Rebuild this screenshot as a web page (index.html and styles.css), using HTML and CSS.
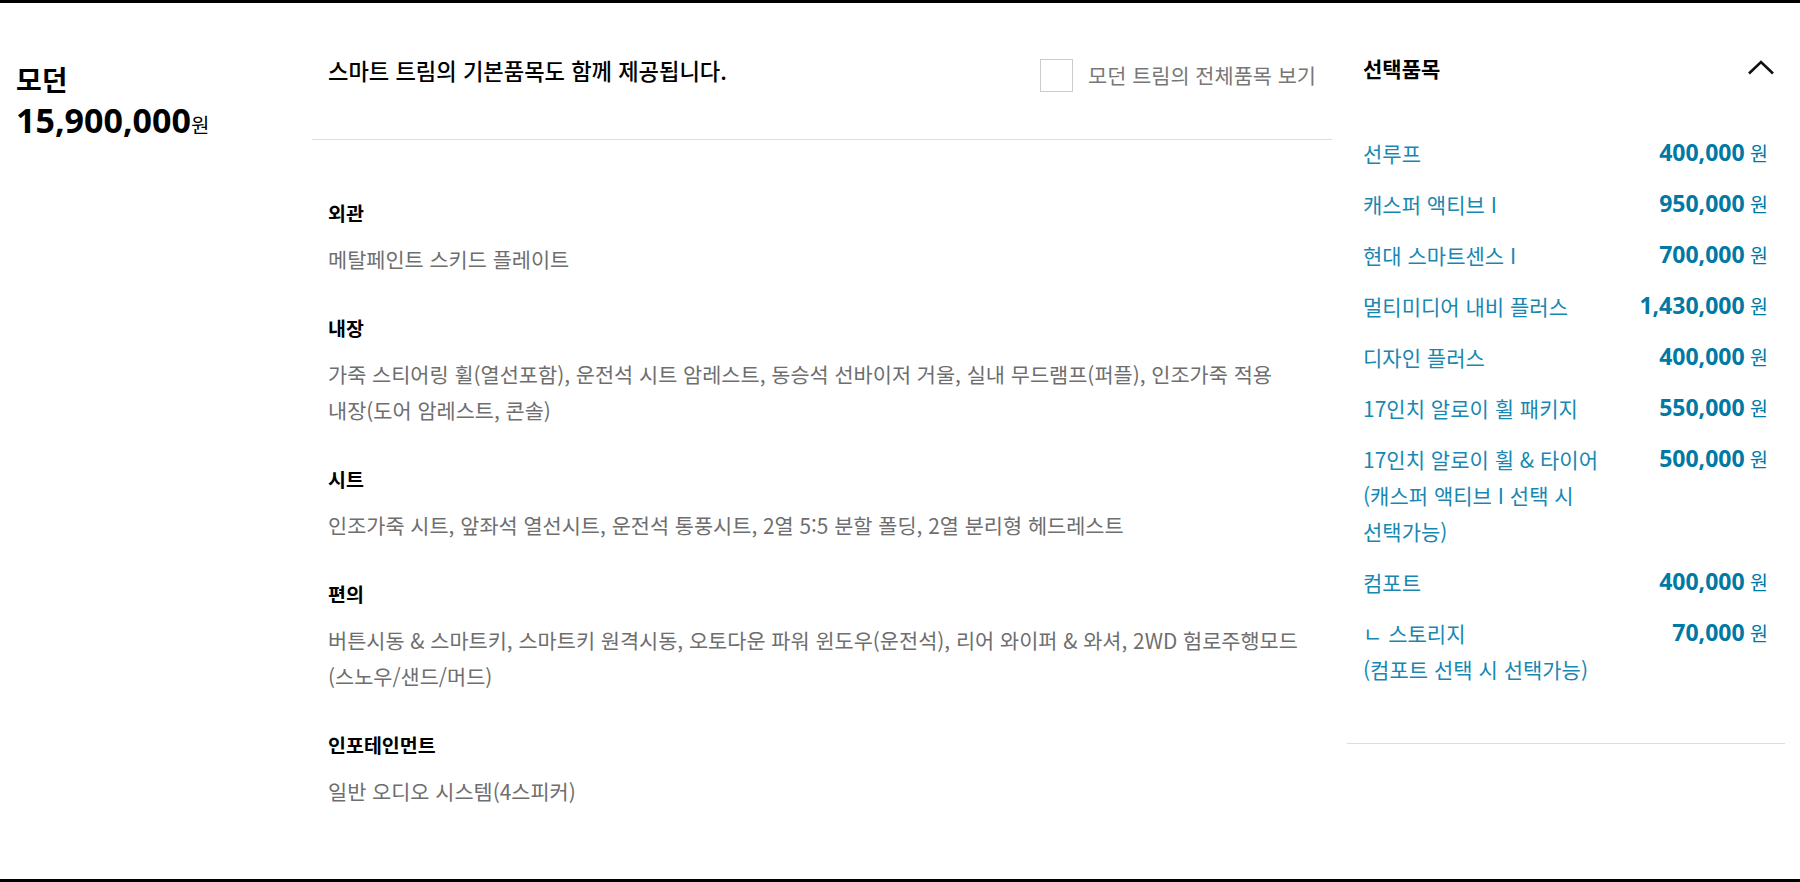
FILE: index.html
```html
<!DOCTYPE html>
<html lang="ko">
<head>
<meta charset="UTF-8">
<meta name="viewport" content="width=device-width, initial-scale=1.0">
<title>모던 트림</title>
<link rel="stylesheet" href="styles.css">
</head>
<body>
<div class="page">
  <div class="trim">
    <div class="trim-name">
      <h1>모던</h1>
      <p class="trim-price"><strong>15,900,000</strong>원</p>
    </div>

    <div class="trim-items">
      <div class="items-head">
        <h2>스마트 트림의 기본품목도 함께 제공됩니다.</h2>
        <label class="check"><span class="box"></span>모던 트림의 전체품목 보기</label>
      </div>
      <div class="item-list">
        <div class="group">
          <h3>외관</h3>
          <p>메탈페인트 스키드 플레이트</p>
        </div>
        <div class="group">
          <h3>내장</h3>
          <p>가죽 스티어링 휠(열선포함), 운전석 시트 암레스트, 동승석 선바이저 거울, 실내 무드램프(퍼플), 인조가죽 적용<br>내장(도어 암레스트, 콘솔)</p>
        </div>
        <div class="group">
          <h3>시트</h3>
          <p>인조가죽 시트, 앞좌석 열선시트, 운전석 통풍시트, 2열 5:5 분할 폴딩, 2열 분리형 헤드레스트</p>
        </div>
        <div class="group">
          <h3>편의</h3>
          <p>버튼시동 &amp; 스마트키, 스마트키 원격시동, 오토다운 파워 윈도우(운전석), 리어 와이퍼 &amp; 와셔, 2WD 험로주행모드<wbr>(스노우/샌드/머드)</p>
        </div>
        <div class="group">
          <h3>인포테인먼트</h3>
          <p>일반 오디오 시스템(4스피커)</p>
        </div>
      </div>
    </div>

    <div class="options">
      <div class="options-head">
        <h2>선택품목</h2>
        <svg class="chevron" width="28" height="15" viewBox="0 0 28 15"><polyline points="2,13.5 14,2 26,13.5" fill="none" stroke="#111" stroke-width="2.6"/></svg>
      </div>
      <ul class="option-list">
        <li><span class="opt-name">선루프</span><span class="opt-price"><b>400,000</b> 원</span></li>
        <li><span class="opt-name">캐스퍼 액티브 I</span><span class="opt-price"><b>950,000</b> 원</span></li>
        <li><span class="opt-name">현대 스마트센스 I</span><span class="opt-price"><b>700,000</b> 원</span></li>
        <li><span class="opt-name">멀티미디어 내비 플러스</span><span class="opt-price"><b>1,430,000</b> 원</span></li>
        <li><span class="opt-name">디자인 플러스</span><span class="opt-price"><b>400,000</b> 원</span></li>
        <li><span class="opt-name">17인치 알로이 휠 패키지</span><span class="opt-price"><b>550,000</b> 원</span></li>
        <li><span class="opt-name">17인치 알로이 휠 &amp; 타이어<br>(캐스퍼 액티브 I 선택 시<br>선택가능)</span><span class="opt-price"><b>500,000</b> 원</span></li>
        <li><span class="opt-name">컴포트</span><span class="opt-price"><b>400,000</b> 원</span></li>
        <li><span class="opt-name">ㄴ 스토리지<br>(컴포트 선택 시 선택가능)</span><span class="opt-price"><b>70,000</b> 원</span></li>
      </ul>
    </div>
  </div>
</div>
</body>
</html>
```

FILE: styles.css
```css
  * {
    box-sizing: border-box;
  }

  body {
    margin: 0;
    padding: 0;
    background: #ffffff;
    color: #000;
    font-family: "Noto Sans CJK KR", "Noto Sans", sans-serif;
  }

  .page {
    min-height: 100vh;
    border-top: 3px solid #000;
    border-bottom: 3px solid #000;
  }

  .trim {
    display: flex;
    align-items: flex-start;
    gap: 15px;
    padding: 40px 15px 0 0;
  }

  /* left: trim name + price */
  .trim-name {
    width: 312px;
    flex-shrink: 0;
    padding: 18px 0 0 16px;
    margin-right: -15px;
  }

  .trim-name h1 {
    margin: 0;
    font-size: 28px;
    line-height: 36px;
    font-weight: 700;
  }

  .trim-price {
    margin: 8px 0 0;
    font-size: 20px;
    line-height: 40px;
  }

  .trim-price strong {
    font-family: "Open Sans", "Liberation Sans", sans-serif;
    font-size: 34px;
    line-height: 30px;
    font-weight: 700;
  }

  /* middle: basic items */
  .trim-items {
    flex: 1;
  }

  .items-head {
    display: flex;
    justify-content: space-between;
    align-items: flex-start;
    height: 97px;
    padding: 12px 16px 0;
    border-bottom: 1px solid #ddd;
  }

  .items-head h2 {
    margin: 0;
    font-size: 22.2px;
    line-height: 30px;
    font-weight: 500;
  }

  .check {
    display: flex;
    align-items: center;
    gap: 15px;
    margin-top: 4px;
    font-size: 20.8px;
    line-height: 33px;
    color: #777;
    cursor: pointer;
  }

  .check .box {
    width: 33px;
    height: 33px;
    border: 1px solid #ccc;
    background: #fff;
  }

  .item-list {
    padding: 59px 16px 0;
  }

  .group {
    margin-bottom: 37px;
  }

  .group h3 {
    margin: 0 0 14px;
    font-size: 19.5px;
    line-height: 28px;
    font-weight: 700;
  }

  .group p {
    margin: 0;
    font-size: 20.8px;
    line-height: 36px;
    color: #6e6e6e;
    word-break: keep-all;
  }

  /* right: selected options */
  .options {
    width: 438px;
    flex-shrink: 0;
    padding: 10px 10px 56px 16px;
    border-bottom: 1px solid #ddd;
  }

  .options-head {
    display: flex;
    justify-content: space-between;
    align-items: flex-start;
  }

  .options-head h2 {
    margin: 0;
    font-size: 21px;
    line-height: 30px;
    font-weight: 700;
  }

  .chevron {
    display: block;
    margin-top: 7px;
  }

  .option-list {
    list-style: none;
    margin: 52px 7px 0 0;
    padding: 0;
    display: flex;
    flex-direction: column;
    gap: 15px;
  }

  .option-list li {
    display: flex;
    justify-content: space-between;
    align-items: flex-start;
    font-size: 21px;
    line-height: 36px;
  }

  .opt-name {
    color: #1887b2;
  }

  .opt-price {
    color: #0079a5;
    white-space: nowrap;
    font-size: 19.5px;
  }

  .opt-price b {
    font-family: "Open Sans", "Liberation Sans", sans-serif;
    font-size: 23px;
    line-height: 20px;
    font-weight: 700;
  }
```
